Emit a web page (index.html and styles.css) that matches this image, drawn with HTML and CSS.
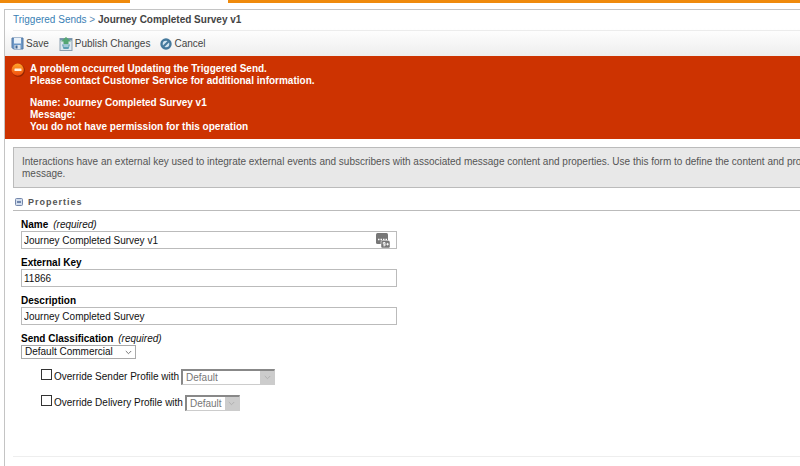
FILE: index.html
```html
<!DOCTYPE html>
<html lang="en">

<head>
    <meta charset="UTF-8">
    <meta name="viewport" content="width=device-width, initial-scale=1.0">
    <link rel="stylesheet" href="styles.css">
    <title>Triggered Sends</title>
</head>

<body>

    <div class="tab-bar">
        <span class="tab-active"></span>
    </div>

    <main class="panel">

        <header class="panel-header">
            <nav class="breadcrumb">
                <a href="#">Triggered Sends</a> <span class="arrow">&gt;</span> <strong>Journey Completed Survey v1</strong>
            </nav>

            <div class="toolbar">
                <button class="tool" type="button">
                    <svg width="13" height="13" viewBox="0 0 13 13">
                        <path d="M1 1h11v11H2.500L1 10.500z" fill="#6c97c6" stroke="#5378a5" />
                        <rect x="3" y="1" width="7" height="5.500" fill="#e9f1f9" />
                        <rect x="3.500" y="8" width="6" height="4" fill="#dfe6ee" />
                        <rect x="4.500" y="8.500" width="2" height="3" fill="#3f6591" />
                    </svg>
                    Save
                </button>
                <button class="tool" type="button">
                    <svg width="14" height="14" viewBox="0 0 14 14">
                        <rect x="1" y="1.500" width="12" height="12" fill="#dce6ee" stroke="#8ba0b0" />
                        <path d="M1 2.500h12" stroke="#7393ad" stroke-width="2" />
                        <path d="M7 0l5 4.500H9.500V7h-5V4.500H2z" fill="#55a673" />
                        <path d="M3 7.500h8l-1.500 4.500h-5z" fill="#5e9fb3" />
                        <path d="M4.500 9h5" stroke="#e8f5fa" />
                    </svg>
                    Publish Changes
                </button>
                <button class="tool" type="button">
                    <svg width="12" height="12" viewBox="0 0 12 12">
                        <circle cx="6" cy="6" r="4.500" fill="#d3e5f0" stroke="#45799c" stroke-width="2.400" />
                        <path d="M3.200 8.800l5.600-5.600" stroke="#45799c" stroke-width="2" />
                    </svg>
                    Cancel
                </button>
            </div>
        </header>

        <section class="error" role="alert">
            <svg width="14" height="14" viewBox="0 0 14 14">
                <defs>
                    <linearGradient id="ball" x1="0" y1="0" x2="0" y2="1">
                        <stop offset="0" stop-color="#ffa62b" />
                        <stop offset="1" stop-color="#f04a0c" />
                    </linearGradient>
                </defs>
                <circle cx="7.400" cy="7.400" r="6.400" fill="#912400" />
                <circle cx="6.700" cy="6.700" r="6.100" fill="url(#ball)" />
                <rect x="3.500" y="5.500" width="7" height="2.400" rx="0.500" fill="#fff0df" />
            </svg>
            <div>
                <p>A problem occurred Updating the Triggered Send.<br>
                    Please contact Customer Service for additional information.</p>
                <p>Name: Journey Completed Survey v1<br>
                    Message:<br>
                    You do not have permission for this operation</p>
            </div>
        </section>

        <div class="content">

            <p class="info">Interactions have an external key used to integrate external events and subscribers with associated message content and properties. Use this form to define the content and prop<br>message.</p>

            <h2 class="section-title">
                <svg width="8" height="8" viewBox="0 0 8 8">
                    <rect x="0.500" y="0.500" width="7" height="7" rx="1" fill="#d3deee" stroke="#7487aa" />
                    <path d="M2 4h4" stroke="#2f4b80" stroke-width="1.200" />
                </svg>
                Properties
            </h2>

            <form class="form">
                <div class="field">
                    <div class="field-label"><label for="name">Name</label><em>(required)</em></div>
                    <div class="input-wrap">
                        <input id="name" class="input" type="text" value="Journey Completed Survey v1">
                        <svg class="manager-icon" width="14" height="15" viewBox="0 0 14 15">
                            <rect x="0" y="0" width="12" height="11" rx="1.500" fill="#777" />
                            <path d="M2 6.500h1.500M4.500 6.500H6M7 6.500h1.500M9.500 6.500H11" stroke="#fff" stroke-width="1.500" />
                            <rect x="5" y="7.500" width="9" height="7.500" rx="1.500" fill="#777" stroke="#fff" stroke-width="0.500" />
                            <path d="M9 11.500V9.500H7.300v1.700H9v1.600H7.300M10.300 11.200h2.600M11.600 9.900v2.600" fill="none" stroke="#fff" stroke-width="0.900" />
                        </svg>
                    </div>
                </div>

                <div class="field">
                    <div class="field-label"><label for="key">External Key</label></div>
                    <input id="key" class="input" type="text" value="11866">
                </div>

                <div class="field">
                    <div class="field-label"><label for="description">Description</label></div>
                    <input id="description" class="input" type="text" value="Journey Completed Survey">
                </div>

                <div class="field">
                    <div class="field-label"><label for="classification">Send Classification</label><em>(required)</em></div>
                    <div class="select-wrap">
                        <select id="classification" class="select">
                            <option>Default Commercial</option>
                        </select>
                        <svg class="chevron" width="7" height="5" viewBox="0 0 7 5">
                            <path d="M0.800 1l2.700 2.700L6.200 1" fill="none" stroke="#666" stroke-width="0.900" />
                        </svg>
                    </div>
                </div>

                <div class="override">
                    <input id="sender" class="checkbox" type="checkbox">
                    <label for="sender">Override Sender Profile with</label>
                    <div class="select-wrap">
                        <select class="select select-disabled select-wide" aria-label="Sender Profile" disabled>
                            <option>Default</option>
                        </select>
                        <span class="select-button"><svg width="7" height="5" viewBox="0 0 7 5">
                            <path d="M0.800 1l2.700 2.700L6.200 1" fill="none" stroke="#b0b0b0" />
                        </svg></span>
                    </div>
                </div>

                <div class="override">
                    <input id="delivery" class="checkbox" type="checkbox">
                    <label for="delivery">Override Delivery Profile with</label>
                    <div class="select-wrap">
                        <select class="select select-disabled" aria-label="Delivery Profile" disabled>
                            <option>Default</option>
                        </select>
                        <span class="select-button"><svg width="7" height="5" viewBox="0 0 7 5">
                            <path d="M0.800 1l2.700 2.700L6.200 1" fill="none" stroke="#b0b0b0" />
                        </svg></span>
                    </div>
                </div>
            </form>

        </div>
    </main>

</body>

</html>
```

FILE: styles.css
```css
* {
    box-sizing: border-box;
}

body {
    margin: 0;
    min-height: 100vh;
    display: flex;
    flex-direction: column;
    overflow: hidden;
    background-color: #fff;
    font-family: "Liberation Sans", Arial, sans-serif;
    font-size: 10px;
    line-height: 12px;
    color: #111;
}

p,
h2 {
    margin: 0;
}

svg {
    display: block;
    flex: none;
}

input,
select,
button {
    font: inherit;
    color: inherit;
    margin: 0;
}

.tab-bar {
    height: 3px;
    padding-left: 130px;
    background-color: #ef8a0c;
}

.tab-active {
    display: block;
    width: 98px;
    height: 3px;
    background-color: #fff;
}

.panel {
    flex: 1;
    margin: 6px 0 0 4px;
    border-top: 1px solid #c4c4c4;
    border-left: 1px solid #c4c4c4;
}

.panel-header {
    background-image: linear-gradient(#fff 40%, #eee);
}

.breadcrumb {
    margin-left: 8px;
    padding: 4px 0;
    border-bottom: 1px solid #ececec;
    color: #444;
}

.breadcrumb a {
    color: #3a7fb5;
    text-decoration: none;
}

.breadcrumb .arrow {
    color: #5c8db5;
}

.toolbar {
    display: flex;
    align-items: center;
    gap: 10px;
    height: 25px;
    padding-left: 6px;
}

.tool {
    display: flex;
    align-items: center;
    gap: 2px;
    padding: 0;
    border: none;
    background: none;
    color: #444;
    cursor: pointer;
}

.error {
    display: flex;
    gap: 5px;
    padding: 7px 6px 6px;
    background-color: #cd3301;
    color: #fff;
    font-weight: bold;
}

.error p + p {
    margin-top: 10px;
}

.content {
    padding: 8px 0 0 8px;
}

.info {
    padding: 8px 0 7px 8px;
    border: 1px solid #bbb;
    border-right: none;
    background-color: #e8e8e8;
    color: #555;
    white-space: nowrap;
}

.section-title {
    display: flex;
    align-items: center;
    gap: 5px;
    padding: 8px 2px 2px;
    border-bottom: 1px solid #bbb;
    color: #555;
    font-size: 9px;
    letter-spacing: 1px;
}

.form {
    padding: 8px 8px 45px;
    border-bottom: 1px solid #eee;
}

.field {
    margin-bottom: 8px;
}

.field-label label {
    font-weight: bold;
    color: #000;
}

.field-label em {
    margin-left: 5px;
}

.input-wrap {
    position: relative;
    max-width: 376px;
}

.input {
    display: block;
    width: 100%;
    max-width: 376px;
    height: 18px;
    padding: 0 2px;
    border: 1px solid #bbb;
    background-color: #fff;
}

.manager-icon {
    position: absolute;
    right: 7px;
    top: 2px;
}

.select-wrap {
    position: relative;
    width: fit-content;
}

.select {
    display: block;
    appearance: none;
    height: 14px;
    padding: 0 22px 0 3px;
    border: 1px solid #aaa;
    border-radius: 0;
    background-color: #fff;
}

.chevron {
    position: absolute;
    right: 4px;
    top: 5px;
}

.override {
    display: flex;
    align-items: center;
    gap: 2px;
    margin: 10px 0 0 20px;
}

.checkbox {
    appearance: none;
    align-self: flex-start;
    width: 11px;
    height: 11px;
    border: 1px solid #333;
    background-color: #fff;
}

.checkbox:checked {
    background-color: #555;
}

.select-disabled {
    height: 16px;
    padding-right: 17px;
    border: 1px solid #ccc;
    border-top: 2px solid #888;
    border-left: 2px solid #888;
    color: #777;
    opacity: 1;
}

.select-wide {
    width: 94px;
}

.select-button {
    position: absolute;
    top: 2px;
    right: 1px;
    bottom: 1px;
    width: 14px;
    display: flex;
    align-items: center;
    justify-content: center;
    background-color: #ccc;
    pointer-events: none;
}
```
